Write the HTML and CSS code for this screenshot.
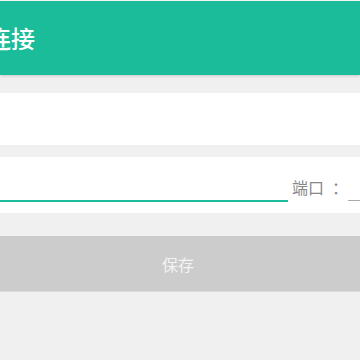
FILE: index.html
```html
<!doctype html>
<html lang="zh-CN">
<head>
  <meta charset="UTF-8">
  <meta name="viewport" content="width=device-width, initial-scale=1.0">
  <title>连接</title>
  <link rel="stylesheet" href="styles.css">
</head>
<body>

<header class="AppBar">
  <h1 class="AppBar-title">连接</h1>
</header>

<main class="Form">
  <div class="Form-card Form-card--name"></div>

  <div class="Form-card Form-row">
    <div class="Form-field Form-field--host"></div>
    <span class="Form-label">端口<span class="Form-colon">：</span></span>
    <div class="Form-field Form-field--port"></div>
  </div>

  <button type="button" class="Form-submit">保存</button>
</main>

</body>
</html>
```

FILE: styles.css
```css
body {
  margin: 0;
  background-color: #f0f0f0;
  font-family: "Noto Sans CJK SC", "Noto Sans", sans-serif;
  overflow: hidden;
}

.AppBar {
  height: 74px;
  border-top: 1px solid #f2f2f2;
  background-color: #1abc9a;
  box-shadow: 0 1px 3px rgba(0, 0, 0, 0.18);
}

.AppBar-title {
  margin: 0;
  text-indent: -13px;
  color: white;
  font-size: 24px;
  font-weight: 500;
  line-height: 74px;
  white-space: nowrap;
}

.Form {
  display: flex;
  flex-direction: column;
  padding-top: 18px;
}

.Form-card {
  background-color: white;
}

.Form-card--name {
  height: 52px;
  margin-bottom: 12px;
}

.Form-row {
  display: flex;
  align-items: flex-end;
  height: 45px;
  padding-bottom: 11px;
  margin-bottom: 23px;
}

.Form-field {
  height: 30px;
}

.Form-field--host {
  flex: 0 0 288px;
  border-bottom: 2px solid #1abc9a;
}

.Form-label {
  flex-shrink: 0;
  margin-left: 4px;
  padding-bottom: 7px;
  color: #888;
  font-size: 16px;
  line-height: 1;
}

.Form-colon {
  margin-left: 8px;
}

.Form-field--port {
  flex: 1;
  margin-bottom: 1px;
  border-bottom: 1px solid #aaa;
}

.Form-submit {
  height: 56px;
  padding: 0 4px 0 0;
  border: 0;
  border-bottom: 1px solid #dadada;
  background-color: #cccccc;
  color: #f4f4f4;
  font-family: inherit;
  font-size: 16px;
}
```
